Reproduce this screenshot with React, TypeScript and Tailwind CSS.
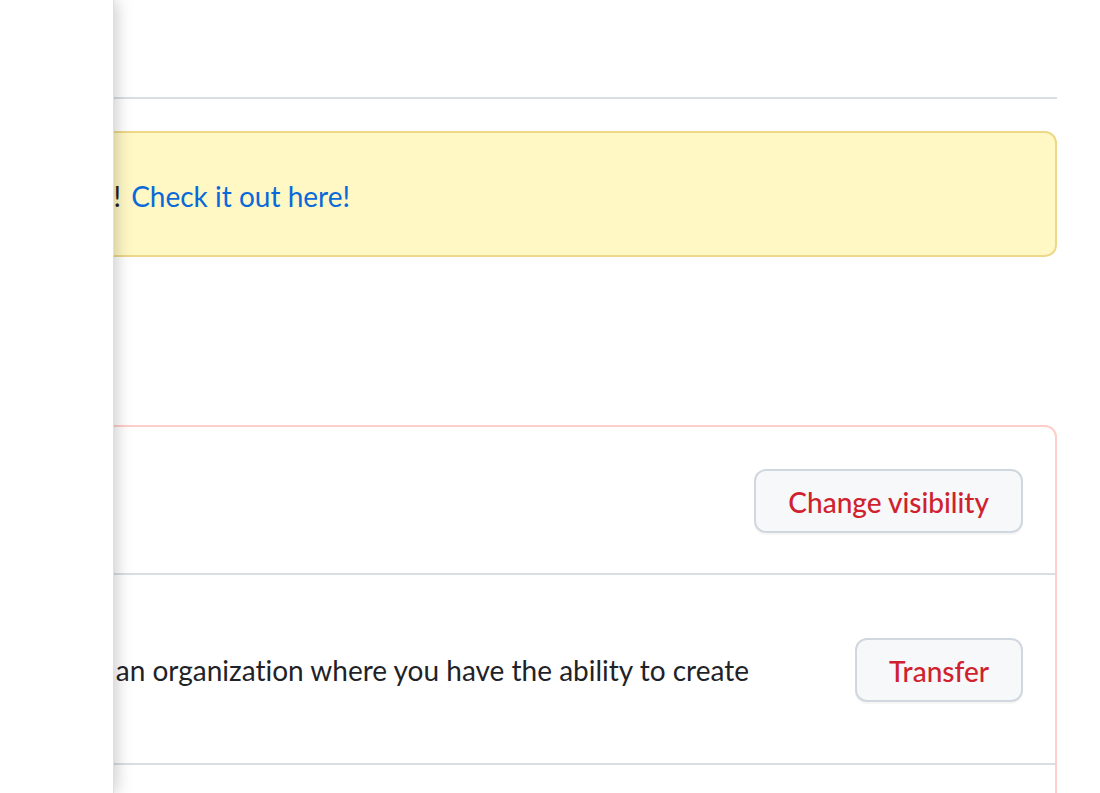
import React from "react";

type DangerRow = {
  title: string;
  desc: string;
  action: string;
};

const rows: DangerRow[] = [
  {
    title: "Change repository visibility",
    desc: "This repository is currently public.",
    action: "Change visibility",
  },
  {
    title: "Transfer ownership",
    desc: "Transfer this repository to another user or to an organization where you have the ability to create repositories.",
    action: "Transfer",
  },
  {
    title: "Archive this repository",
    desc: "Mark this repository as archived and read-only.",
    action: "Archive this repository",
  },
  {
    title: "Delete this repository",
    desc: "Once you delete a repository, there is no going back. Please be certain.",
    action: "Delete this repository",
  },
];

const App = () => {
  return (
    <div
      className="relative min-h-screen bg-white text-[#1f2328] text-[28px] leading-[42px] overflow-hidden [font-variant-ligatures:none]"
      style={{ fontFamily: "Lato, 'Noto Sans', sans-serif" }}
    >
      {/* settings page, scrolled to the right */}
      <div className="ml-[-468px] mr-[43px]">
        <div className="h-[99px] flex items-end pb-[16px] border-b-2 border-[#d8dee4]">
          <h1 className="text-[48px] leading-[60px] font-normal">General</h1>
        </div>

        <div className="mt-[32px] h-[126px] flex items-center pt-[3px] pl-[32px] pr-[40px] bg-[#fff8c5] border-2 border-[#eed788] rounded-[12px] whitespace-nowrap">
          Rulesets are now available for this repository!{" "}
          <a className="text-[#0969da] ml-[10px]">Check it out here!</a>
        </div>

        <div className="h-[168px] flex items-end pb-[32px]">
          <h2 className="text-[48px] leading-[60px] font-normal">Danger Zone</h2>
        </div>

        <div className="border-2 border-[#ffcecb] rounded-[12px]">
          {rows.map((r, i) => (
            <div
              key={r.title}
              className={
                "flex items-center pt-[32px] pb-[30px] px-[32px] " +
                (i > 0 ? "border-t-2 border-[#d8dee4]" : "")
              }
            >
              <div className="flex-1">
                <div className="font-bold">{r.title}</div>
                <p>{r.desc}</p>
              </div>
              <button className="ml-[32px] shrink-0 h-[64px] px-[32px] pt-[2px] bg-[#f6f8fa] border-2 border-[#d0d7de] rounded-[12px] text-[#cf222e] font-medium shadow-[0_2px_0_rgba(31,35,40,0.04)]">
                {r.action}
              </button>
            </div>
          ))}
        </div>
      </div>

      {/* side drawer overlay */}
      <div className="fixed inset-y-0 left-0 w-[114px] bg-white border-r border-[#e0e0e0] shadow-[2px_0_16px_rgba(0,0,0,0.22)]" />
    </div>
  );
};

export default App;
